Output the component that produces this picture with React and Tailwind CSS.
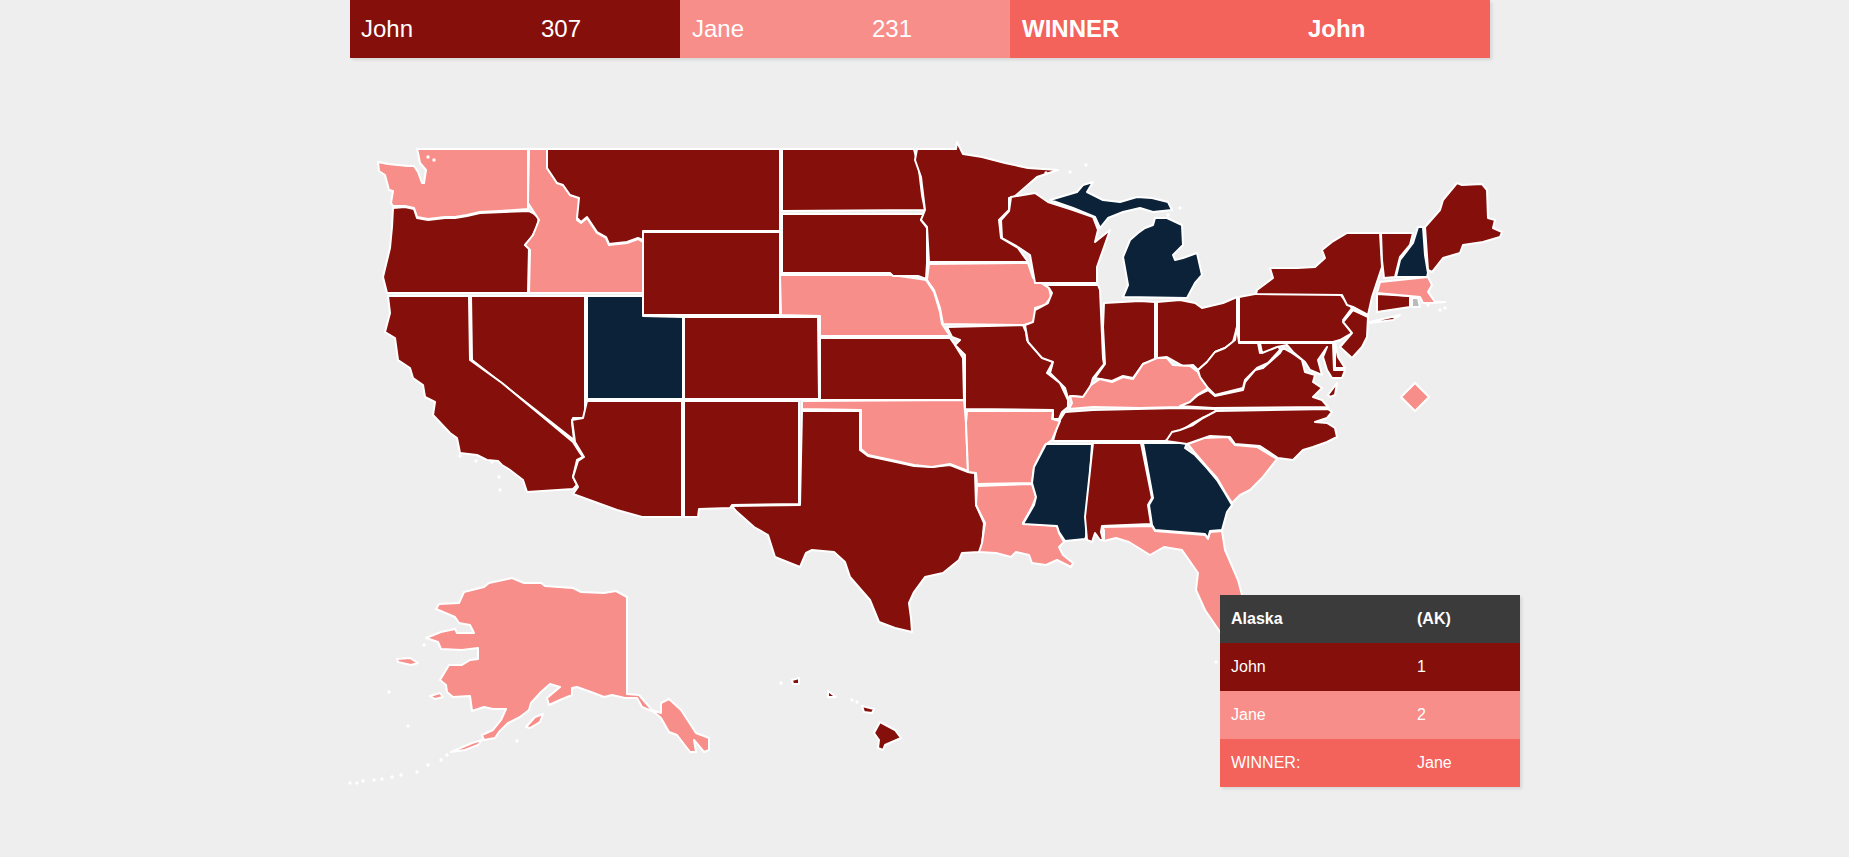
const DARK = '#850f0a'
const PINK = '#f78e89'
const NAVY = '#0b2239'
const GREY = '#bbbbbb'

// state outlines, in page pixels
const STATES = [
  { id: 'WA', fill: PINK, pts: '417,149 528,149 528,209 500,211 480,212 467,215 455,217 445,217 428,219 417,217 414,208 405,206 393,206 391,203 393,191 389,190 385,175 379,171 378,162 388,164 408,166 414,166 418,172 422,183 424,183 426,170 420,163 418,153' },
  { id: 'OR', fill: DARK, pts: '393,208 405,207 414,209 417,218 428,220 445,218 455,218 467,216 480,213 529,211 533,213 539,218 537,227 532,237 525,245 529,248 528,293 387,293 383,277 390,248 392,227' },
  { id: 'ID', fill: PINK, pts: '529,149 547,149 547,168 553,177 557,183 563,185 570,195 580,198 578,213 577,220 581,223 587,218 597,233 606,238 609,245 627,243 638,239 643,242 643,293 529,293 530,250 525,245 533,235 539,220 528,203' },
  { id: 'MT', fill: DARK, pts: '547,149 780,149 780,231 643,231 643,240 638,238 627,242 609,244 606,237 597,232 587,217 581,222 577,218 579,198 570,195 563,185 557,183 553,177 547,168' },
  { id: 'WY', fill: DARK, pts: '643,232 780,232 780,315 643,315' },
  { id: 'UT', fill: NAVY, pts: '587,296 643,296 643,316 683,317 683,399 587,399' },
  { id: 'CO', fill: DARK, pts: '684,317 818,317 819,399 684,399' },
  { id: 'NV', fill: DARK, pts: '471,296 585,296 585,417 582,418 573,418 572,422 574,440 472,360' },
  { id: 'CA', fill: DARK, pts: '388,296 469,296 470,360 502,383 573,442 580,453 583,457 577,460 573,477 577,485 573,489 527,492 523,480 510,470 502,465 498,461 487,460 477,455 460,453 457,438 450,433 433,415 435,402 425,397 423,385 413,378 410,368 398,360 395,338 385,332 390,313' },
  { id: 'AZ', fill: DARK, pts: '587,401 682,401 682,517 642,517 617,510 573,494 578,487 573,477 578,461 584,457 575,442 572,420 583,418' },
  { id: 'NM', fill: DARK, pts: '684,401 799,401 799,504 732,505 730,508 699,509 698,517 684,517' },
  { id: 'TX', fill: DARK, pts: '802,411 860,411 860,450 868,456 896,462 914,466 932,467 950,465 968,472 975,473 976,505 984,523 982,547 979,552 962,553 959,560 943,573 925,577 914,592 909,603 911,618 912,632 895,628 879,622 870,600 850,577 845,562 834,552 812,550 806,553 800,567 775,557 768,535 754,527 736,511 732,506 800,505' },
  { id: 'OK', fill: PINK, pts: '802,401 964,400 966,423 968,471 950,464 932,467 914,465 896,461 868,455 861,449 861,410 802,409' },
  { id: 'KS', fill: DARK, pts: '820,338 950,338 955,345 963,358 964,400 820,400' },
  { id: 'NE', fill: PINK, pts: '780,275 892,275 920,279 926,280 934,292 940,312 942,324 950,336 820,336 820,316 781,315' },
  { id: 'ND', fill: DARK, pts: '782,149 914,149 919,170 922,195 925,210 782,211' },
  { id: 'SD', fill: DARK, pts: '782,214 924,214 921,220 927,228 927,263 926,279 918,276 893,276 890,273 782,273' },
  { id: 'MN', fill: DARK, pts: '917,149 956,149 957,142 963,154 982,157 1005,163 1028,168 1058,170 1037,177 1014,197 1009,198 1009,210 999,220 1001,238 1018,248 1028,262 929,262 927,227 921,220 925,210 921,177 915,160' },
  { id: 'IA', fill: PINK, pts: '929,264 1028,263 1033,278 1049,288 1051,297 1045,305 1035,308 1035,322 1024,325 943,324 940,308 934,290 927,280' },
  { id: 'WI', fill: DARK, pts: '1011,197 1035,193 1048,202 1073,210 1093,217 1098,230 1095,242 1110,230 1103,250 1097,267 1097,283 1035,283 1030,255 1018,247 1002,238 1001,220 1009,211' },
  { id: 'MO', fill: DARK, pts: '947,327 1023,325 1026,332 1027,340 1040,355 1053,362 1047,373 1060,383 1068,400 1068,407 1062,412 1059,419 1053,419 1053,410 965,409 965,355 955,345 960,340 952,337' },
  { id: 'IL', fill: DARK, pts: '1045,285 1098,285 1100,290 1103,358 1104,364 1093,378 1090,388 1083,397 1072,396 1068,398 1065,388 1050,373 1053,362 1042,358 1028,342 1025,325 1033,322 1035,310 1048,303 1052,293 1049,288' },
  { id: 'IN', fill: DARK, pts: '1104,303 1140,301 1155,302 1155,360 1143,364 1133,378 1123,376 1112,381 1100,379 1095,378 1105,364 1103,327' },
  { id: 'OH', fill: DARK, pts: '1157,302 1180,300 1195,303 1202,308 1223,303 1237,297 1237,327 1233,342 1225,348 1215,352 1207,362 1198,370 1193,365 1183,366 1167,357 1157,358' },
  { id: 'KY', fill: PINK, pts: '1070,396 1083,397 1091,385 1100,379 1112,382 1123,377 1133,379 1143,364 1157,358 1167,358 1173,365 1190,366 1198,372 1202,380 1208,388 1197,395 1187,405 1180,407 1140,408 1093,407 1069,409 1072,403' },
  { id: 'TN', fill: DARK, pts: '1065,412 1093,410 1180,408 1216,409 1215,413 1202,418 1193,423 1182,430 1165,441 1053,441 1058,423' },
  { id: 'AR', fill: PINK, pts: '967,411 1053,411 1052,419 1060,421 1052,440 1045,445 1034,467 1032,483 977,484 976,473 968,472 966,423' },
  { id: 'LA', fill: PINK, pts: '977,486 1032,484 1036,497 1032,507 1023,523 1057,526 1059,533 1064,542 1059,547 1063,555 1073,563 1071,567 1057,560 1046,565 1032,563 1029,555 1016,552 1011,557 996,553 979,552 982,543 985,523 976,505' },
  { id: 'MS', fill: NAVY, pts: '1046,444 1092,444 1086,537 1085,539 1065,541 1059,532 1057,526 1023,524 1034,505 1036,497 1032,483 1034,467' },
  { id: 'AL', fill: DARK, pts: '1093,443 1141,443 1152,498 1148,505 1151,524 1102,526 1101,532 1103,540 1100,540 1095,533 1092,542 1087,540 1085,517' },
  { id: 'FL', fill: PINK, pts: '1102,527 1152,526 1155,531 1205,535 1208,539 1210,532 1222,531 1225,550 1238,580 1242,595 1245,640 1225,640 1220,632 1205,610 1196,590 1198,573 1182,550 1164,547 1150,555 1129,542 1116,538 1104,541 1104,530' },
  { id: 'GA', fill: NAVY, pts: '1143,443 1187,443 1185,448 1195,455 1207,468 1217,480 1225,493 1232,505 1227,512 1222,530 1210,531 1208,538 1205,534 1155,530 1152,525 1149,505 1153,498' },
  { id: 'SC', fill: PINK, pts: '1188,444 1203,438 1228,437 1235,445 1257,447 1277,459 1262,478 1250,490 1240,495 1232,503 1225,492 1217,478 1207,467 1195,453' },
  { id: 'NC', fill: DARK, pts: '1166,441 1172,432 1180,430 1193,425 1203,418 1216,411 1328,409 1332,412 1327,418 1315,422 1327,423 1335,428 1337,437 1327,442 1313,447 1303,450 1293,460 1278,458 1260,446 1235,444 1230,437 1210,436 1187,444' },
  { id: 'VA', fill: DARK, pts: '1180,406 1190,402 1198,395 1208,390 1215,396 1243,390 1245,382 1255,370 1263,368 1280,353 1283,348 1292,353 1295,355 1302,360 1305,372 1315,375 1313,382 1322,388 1313,397 1322,400 1328,407 1213,408' },
  { id: 'VA2', fill: DARK, pts: '1328,395 1337,383 1335,395 1330,397' },
  { id: 'WV', fill: DARK, pts: '1239,343 1258,343 1260,353 1273,348 1278,345 1280,350 1268,363 1257,368 1245,380 1243,388 1215,395 1208,388 1200,377 1198,370 1207,362 1215,352 1225,348 1235,340 1237,327' },
  { id: 'PA', fill: DARK, pts: '1239,297 1255,294 1340,294 1347,303 1352,308 1343,320 1352,333 1340,340 1333,342 1239,342' },
  { id: 'NY', fill: DARK, pts: '1380,233 1347,233 1332,242 1322,250 1325,258 1315,267 1297,268 1270,268 1273,278 1257,290 1256,294 1342,295 1347,305 1353,307 1368,315 1372,297 1382,267' },
  { id: 'LI', fill: DARK, pts: '1370,322 1400,315 1393,320 1370,323' },
  { id: 'NJ', fill: DARK, pts: '1353,310 1368,317 1367,337 1362,347 1352,358 1340,347 1352,333 1343,322' },
  { id: 'DE', fill: DARK, pts: '1335,342 1338,357 1345,368 1335,368' },
  { id: 'MD', fill: DARK, pts: '1260,343 1333,343 1334,370 1345,370 1342,378 1332,378 1327,370 1323,357 1327,347 1318,360 1322,375 1310,370 1305,362 1293,352 1287,345 1277,347 1262,353' },
  { id: 'CT', fill: DARK, pts: '1377,294 1410,296 1410,307 1377,312' },
  { id: 'RI', fill: GREY, pts: '1412,298 1418,298 1420,307 1412,307' },
  { id: 'MA', fill: PINK, pts: '1380,282 1428,277 1432,285 1428,292 1435,302 1445,302 1433,303 1423,303 1420,297 1377,293' },
  { id: 'VT', fill: DARK, pts: '1381,233 1413,233 1410,245 1400,257 1395,277 1384,278 1382,260' },
  { id: 'NH', fill: NAVY, pts: '1418,227 1423,227 1425,255 1428,273 1427,277 1396,277 1400,260 1413,243' },
  { id: 'ME', fill: DARK, pts: '1425,227 1440,210 1443,200 1457,183 1462,185 1482,184 1487,190 1488,218 1495,220 1493,228 1502,232 1500,237 1483,242 1463,245 1460,253 1443,258 1432,272 1428,270' },
  { id: 'MI', fill: NAVY, pts: '1155,218 1167,218 1182,225 1183,245 1173,255 1175,260 1183,258 1197,253 1202,275 1195,283 1187,298 1123,297 1128,285 1123,257 1130,240 1138,233 1145,228 1153,225' },
  { id: 'MI2', fill: NAVY, pts: '1050,200 1077,192 1083,185 1093,182 1087,192 1103,200 1120,202 1137,197 1152,198 1168,202 1172,210 1153,212 1140,208 1123,212 1108,218 1100,228 1095,217 1073,208' },
  { id: 'DC', fill: PINK, pts: '1415,383 1429,397 1415,411 1401,397' },
  { id: 'AK', fill: PINK, pts: '436,609 439,604 459,603 464,592 484,587 489,583 512,578 524,583 541,583 545,586 573,588 581,592 604,593 616,591 627,597 627,694 639,695 652,710 661,713 661,703 669,699 681,710 696,733 709,738 709,750 704,752 694,740 696,752 690,752 677,735 669,732 661,718 654,712 642,707 637,698 625,698 612,695 604,697 591,692 577,687 572,688 572,695 560,700 549,705 547,698 560,687 550,684 541,692 531,703 529,710 520,717 508,723 499,732 495,738 484,740 482,735 493,730 501,720 506,709 493,709 484,707 472,711 470,696 453,697 447,692 446,685 440,680 449,665 462,665 470,660 478,659 478,648 462,650 441,649 438,642 426,638 441,632 455,629 457,633 474,633 470,625 459,623 455,617' },
  { id: 'AK2', fill: PINK, pts: '397,659 410,658 418,663 411,665 398,662' },
  { id: 'AK3', fill: PINK, pts: '430,696 440,693 443,697 435,699' },
  { id: 'AK4', fill: PINK, pts: '526,727 535,717 543,714 540,722 530,728' },
  { id: 'AK5', fill: PINK, pts: '451,752 458,749 472,743 482,740 478,745 465,750' },
  { id: 'HI', fill: DARK, pts: '880,722 895,730 901,738 885,745 883,750 878,748 879,740 874,733' },
  { id: 'HI2', fill: DARK, pts: '862,706 874,709 872,713 864,712' },
  { id: 'HI3', fill: DARK, pts: '828,691 836,697 828,697' },
  { id: 'HI4', fill: DARK, pts: '792,680 799,678 799,684 793,684' },
]

// small islands that only show as white specks
const SPECKS = [
  [350, 783], [357, 783], [363, 781], [374, 780], [382, 779], [392, 777], [401, 775], [417, 772], [428, 765], [441, 760], [447, 755],
  [424, 645], [389, 692], [408, 726], [517, 741], [781, 683], [852, 700], [857, 702],
  [1046, 173], [1070, 172], [1086, 165], [1168, 215], [1180, 208],
  [1428, 305], [1440, 310], [1445, 308], [1216, 662], [434, 160], [428, 157],
  [460, 456], [476, 461], [492, 462], [499, 477], [500, 490],
]

export default function App() {
  return (
    <div className="min-h-screen bg-[#eeeeee] font-['Liberation_Sans',Arial,sans-serif] text-white">
      {/* Score bar */}
      <div className="ml-[350px] flex h-[58px] w-[1140px] items-center text-[24px] shadow-[2px_2px_3px_rgba(0,0,0,0.1)]">
        <div className="flex h-full w-[330px] items-center bg-[#850f0a] pl-[11px]">
          <span className="w-[180px]">John</span>
          <span>307</span>
        </div>
        <div className="flex h-full w-[330px] items-center bg-[#f78e89] pl-[12px]">
          <span className="w-[180px]">Jane</span>
          <span>231</span>
        </div>
        <div className="flex h-full w-[480px] items-center bg-[#f3625b] pl-[12px] font-bold">
          <span className="w-[286px]">WINNER</span>
          <span>John</span>
        </div>
      </div>

      {/* Map + state tooltip */}
      <div className="relative mt-[72px] ml-[340px] h-[660px] w-[1200px]">
        <svg viewBox="340 130 1200 660" className="block h-[660px] w-[1200px]">
          {STATES.map(s => (
            <polygon key={s.id} points={s.pts} fill={s.fill} stroke="#ffffff" strokeWidth="2" strokeLinejoin="round" />
          ))}
          {SPECKS.map(([x, y]) => (
            <circle key={`${x}-${y}`} cx={x} cy={y} r="1.7" fill="#ffffff" />
          ))}
        </svg>

        <div className="absolute top-[465px] left-[880px] w-[300px] text-[16px] shadow-[2px_2px_3px_rgba(0,0,0,0.1)]">
          <div className="flex h-[48px] items-center bg-[#3b3b3b] pl-[11px] font-bold">
            <span className="w-[186px]">Alaska</span>
            <span>(AK)</span>
          </div>
          <div className="flex h-[48px] items-center bg-[#850f0a] pl-[11px]">
            <span className="w-[186px]">John</span>
            <span>1</span>
          </div>
          <div className="flex h-[48px] items-center bg-[#f78e89] pl-[11px]">
            <span className="w-[186px]">Jane</span>
            <span>2</span>
          </div>
          <div className="flex h-[48px] items-center bg-[#f3625b] pl-[11px]">
            <span className="w-[186px]">WINNER:</span>
            <span>Jane</span>
          </div>
        </div>
      </div>
    </div>
  )
}
